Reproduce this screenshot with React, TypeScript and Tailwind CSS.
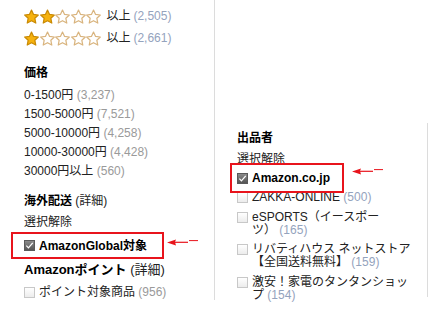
import React from "react";

const font = "font-['Liberation_Sans','Noto_Sans_CJK_JP',sans-serif]";

const Star: React.FC<{ on: boolean }> = ({ on }) => (
  <svg width="15" height="15" viewBox="0.8 0.8 22.4 21.4" className="block">
    <path
      d="M12 1.8l3.1 6.6 7.1.9-5.2 4.9 1.4 7.1L12 17.8l-6.4 3.5 1.4-7.1-5.2-4.9 7.1-.9z"
      fill={on ? "#f6b20e" : "#ffffff"}
      stroke={on ? "#c98a05" : "#d9b47e"}
      strokeWidth="1.8"
      strokeLinejoin="round"
    />
  </svg>
);

const Check: React.FC<{ checked?: boolean }> = ({ checked }) =>
  checked ? (
    <span className="flex h-[11px] w-[11px] shrink-0 items-center justify-center border border-[#5a5a5a] bg-gradient-to-b from-[#8a8a8a] to-[#555]">
      <svg width="9" height="9" viewBox="0 0 10 10">
        <path d="M1.5 5.2l2.3 2.4L8.6 2" fill="none" stroke="#fff" strokeWidth="1.4" />
      </svg>
    </span>
  ) : (
    <span className="block h-[11px] w-[11px] shrink-0 border border-[#c8c8c8] bg-gradient-to-b from-[#fff] to-[#ececec]" />
  );

const Arrow: React.FC = () => (
  <svg width="32" height="8" viewBox="0 0 32 8" className="block">
    <path d="M0 4.5L9 1.5 8 4 9 7.5z" fill="#e8141c" />
    <path d="M8 4.3H21" stroke="#e8141c" strokeWidth="1.2" />
    <path d="M22 2.6H31" stroke="#e8141c" strokeWidth="1" />
  </svg>
);

const ratings = [
  { on: 2, count: "(2,505)" },
  { on: 1, count: "(2,661)" },
];

const prices = [
  { label: "0-1500円", count: "(3,237)" },
  { label: "1500-5000円", count: "(7,521)" },
  { label: "5000-10000円", count: "(4,258)" },
  { label: "10000-30000円", count: "(4,428)" },
  { label: "30000円以上", count: "(560)" },
];

const sellers = [
  { lines: ["eSPORTS（イースポー", "ツ）"], count: "(165)" },
  { lines: ["リバティハウス ネットストア", "【全国送料無料】"], count: "(159)" },
  { lines: ["激安！家電のタンタンショッ", "プ"], count: "(154)" },
];

const App: React.FC = () => {
  return (
    <div className={`flex h-[328px] w-[436px] overflow-hidden bg-white text-[12px] text-[#222] ${font}`}>
      {/* left column */}
      <div className="h-[300px] w-[215px] shrink-0 border-r border-[#dcdcdc] pl-[24px] pt-[5px]">
        {ratings.map((r, i) => (
          <div key={i} className="flex h-[22px] items-center">
            <div className="flex gap-[0.6px]">
              {[0, 1, 2, 3, 4].map((s) => (
                <Star key={s} on={s < r.on} />
              ))}
            </div>
            <span className="ml-[5px]">以上</span>
            <span className="ml-[3px] text-[#94a3bd]">{r.count}</span>
          </div>
        ))}

        <div className="mt-[15px] font-bold leading-[19px] text-black">価格</div>
        <div className="mt-[3px]">
          {prices.map((p) => (
            <div key={p.label} className="leading-[19px]">
              {p.label} <span className="text-[#9a9a9a]">{p.count}</span>
            </div>
          ))}
        </div>

        <div className="mt-[11px] leading-[19px]">
          <span className="font-bold text-black">海外配送</span> (詳細)
        </div>
        <div className="mt-[2px] leading-[19px]">選択解除</div>
        <div className="flex items-start">
          <div className="-ml-[13px] flex h-[27px] w-[153px] items-center gap-[4px] border-2 border-[#e8141c] pl-[11px]">
            <Check checked />
            <span className="font-bold text-black">AmazonGlobal対象</span>
          </div>
          <div className="ml-[3px] mt-[6px]">
            <Arrow />
          </div>
        </div>

        <div className="mt-[1px] text-[13px] leading-[19px]">
          <span className="font-bold text-black">Amazonポイント</span> (詳細)
        </div>
        <div className="mt-[4px] flex items-center gap-[4px] leading-[19px]">
          <Check />
          <span>
            ポイント対象商品 <span className="text-[#9a9a9a]">(956)</span>
          </span>
        </div>
      </div>

      {/* right column */}
      <div className="pt-[123px]">
        <div className="h-[174px] w-[213px] border-r border-[#dcdcdc] pl-[22px] pt-[6px]">
          <div className="font-bold leading-[18px] text-black">出品者</div>
          <div className="mt-[3px] leading-[18px]">選択解除</div>
          <div className="-mt-[5px] flex items-start">
            <div className="relative z-10 -ml-[7px] flex h-[30px] w-[114px] items-center gap-[4px] border-2 border-[#e8141c] pl-[5px]">
              <Check checked />
              <span className="font-bold text-black">Amazon.co.jp</span>
            </div>
            <div className="ml-[8px] mt-[4px]">
              <Arrow />
            </div>
          </div>
          <div className="-mt-[2px] flex items-start gap-[4px] leading-[13px]">
            <span className="mt-[1px]">
              <Check />
            </span>
            <span>
              ZAKKA-ONLINE <span className="text-[#94a3bd]">(500)</span>
            </span>
          </div>
          {sellers.map((s, i) => (
            <div key={i} className={`flex items-start gap-[4px] leading-[13px] ${i === 1 ? "mt-[6px]" : "mt-[7px]"}`}>
              <span className="mt-[1px]">
                <Check />
              </span>
              <span>
                {s.lines[0]}
                <br />
                {s.lines[1]} <span className="text-[#94a3bd]">{s.count}</span>
              </span>
            </div>
          ))}
        </div>
      </div>
    </div>
  );
};

export default App;
